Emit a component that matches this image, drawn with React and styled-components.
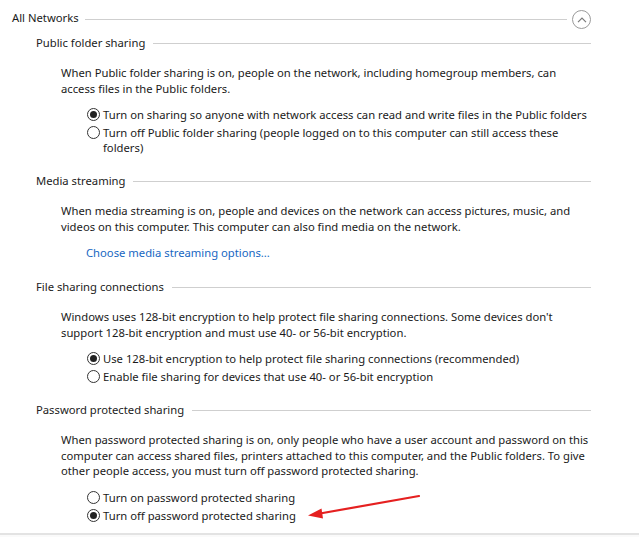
import React from 'react';
import styled, { createGlobalStyle } from 'styled-components';

const GlobalStyle = createGlobalStyle`
  html, body {
    margin: 0;
    padding: 0;
    background: #fff;
  }
  body {
    font-family: "Noto Sans", "Open Sans", sans-serif;
    font-size: 11.25px;
    color: #1a1a1a;
  }
`;

const sections = [
  {
    title: 'Public folder sharing',
    text: [
      'When Public folder sharing is on, people on the network, including homegroup members, can',
      'access files in the Public folders.',
    ],
    options: [
      { lines: ['Turn on sharing so anyone with network access can read and write files in the Public folders'], checked: true },
      {
        lines: [
          'Turn off Public folder sharing (people logged on to this computer can still access these',
          'folders)',
        ],
      },
    ],
  },
  {
    title: 'Media streaming',
    text: [
      'When media streaming is on, people and devices on the network can access pictures, music, and',
      'videos on this computer. This computer can also find media on the network.',
    ],
    link: 'Choose media streaming options...',
  },
  {
    title: 'File sharing connections',
    text: [
      "Windows uses 128-bit encryption to help protect file sharing connections. Some devices don't",
      'support 128-bit encryption and must use 40- or 56-bit encryption.',
    ],
    options: [
      { lines: ['Use 128-bit encryption to help protect file sharing connections (recommended)'], checked: true },
      { lines: ['Enable file sharing for devices that use 40- or 56-bit encryption'] },
    ],
  },
  {
    title: 'Password protected sharing',
    text: [
      'When password protected sharing is on, only people who have a user account and password on this',
      'computer can access shared files, printers attached to this computer, and the Public folders. To give',
      'other people access, you must turn off password protected sharing.',
    ],
    options: [
      { lines: ['Turn on password protected sharing'] },
      { lines: ['Turn off password protected sharing'], checked: true },
    ],
  },
];

const Lines = ({ lines }) =>
  lines.map((l, i) => (
    <React.Fragment key={i}>
      {i > 0 && <br />}
      {l}
    </React.Fragment>
  ));

const App = () => (
  <>
    <GlobalStyle />
    <Page>
      <GroupHeader>
        <span>All Networks</span>
        <Rule />
        <CollapseButton aria-label="collapse">
          <svg width="10" height="6" viewBox="0 0 10 6">
            <path d="M1 5.2 L5 1.2 L9 5.2" fill="none" stroke="#7a7a7a" strokeWidth="1.2" />
          </svg>
        </CollapseButton>
      </GroupHeader>

      {sections.map((s) => (
        <Section key={s.title}>
          <SectionHeading>
            <span>{s.title}</span>
            <Rule />
          </SectionHeading>
          <Body>
            <Paragraph>
              <Lines lines={s.text} />
            </Paragraph>
            {s.link && <Link href="#">{s.link}</Link>}
            {s.options && (
              <Options>
                {s.options.map((o, i) => (
                  <Option key={i}>
                    <Radio $checked={o.checked} />
                    <span>
                      <Lines lines={o.lines} />
                    </span>
                  </Option>
                ))}
              </Options>
            )}
          </Body>
        </Section>
      ))}
      <Arrow width="120" height="30" viewBox="0 0 120 30">
        <line x1="113" y1="4" x2="14" y2="21.5" stroke="#e52020" strokeWidth="2.2" strokeLinecap="round" />
        <path d="M2 23.5 L15.5 16.5 L17 26.5 Z" fill="#e52020" />
      </Arrow>
    </Page>
    <Footer />
  </>
);

export default App;

const Page = styled.div`
  position: relative;
  padding: 10px 48px 0 12px;
  height: 533px;
  box-sizing: border-box;
`;

const GroupHeader = styled.div`
  display: flex;
  align-items: center;
  gap: 6px;
  height: 19px;
  line-height: 16px;
  span {
    margin-top: -3px;
  }
`;

const Rule = styled.div`
  flex: 1;
  height: 1px;
  background: #cfcfcf;
`;

const CollapseButton = styled.button`
  width: 19px;
  height: 19px;
  padding: 0;
  border: 1px solid #9a9a9a;
  border-radius: 50%;
  background: #fff;
  display: flex;
  align-items: center;
  justify-content: center;
  margin-left: -1px;
`;

const Section = styled.section`
  margin-left: 24px;
  margin-top: 6px;
  & + & {
    margin-top: 18px;
  }
`;

const SectionHeading = styled.div`
  display: flex;
  align-items: center;
  gap: 8px;
  height: 16px;
  line-height: 16px;
  color: #222;
`;

const Body = styled.div`
  padding-left: 25px;
  margin-top: 14px;
`;

const Paragraph = styled.p`
  margin: 0;
  line-height: 15.5px;
  white-space: nowrap;
`;

const Link = styled.a`
  display: block;
  margin: 11px 0 0 25px;
  line-height: 16px;
  color: #1767c2;
  text-decoration: none;
`;

const Options = styled.div`
  display: flex;
  flex-direction: column;
  gap: 3px;
  margin: 11px 0 0 26px;
`;

const Option = styled.label`
  display: flex;
  align-items: flex-start;
  gap: 3px;
  line-height: 15px;
  white-space: nowrap;
`;

const Radio = styled.span`
  flex: none;
  width: 11px;
  height: 11px;
  margin-top: 1px;
  border: 1px solid #333;
  border-radius: 50%;
  background: #fff;
  display: flex;
  align-items: center;
  justify-content: center;
  &::after {
    content: '';
    width: 7px;
    height: 7px;
    border-radius: 50%;
    background: ${(p) => (p.$checked ? '#222' : 'transparent')};
  }
`;

const Arrow = styled.svg`
  position: absolute;
  left: 306px;
  top: 492px;
`;

const Footer = styled.div`
  height: 4px;
  border-top: 2px solid #e3e3e3;
  background: #fafafa;
`;
